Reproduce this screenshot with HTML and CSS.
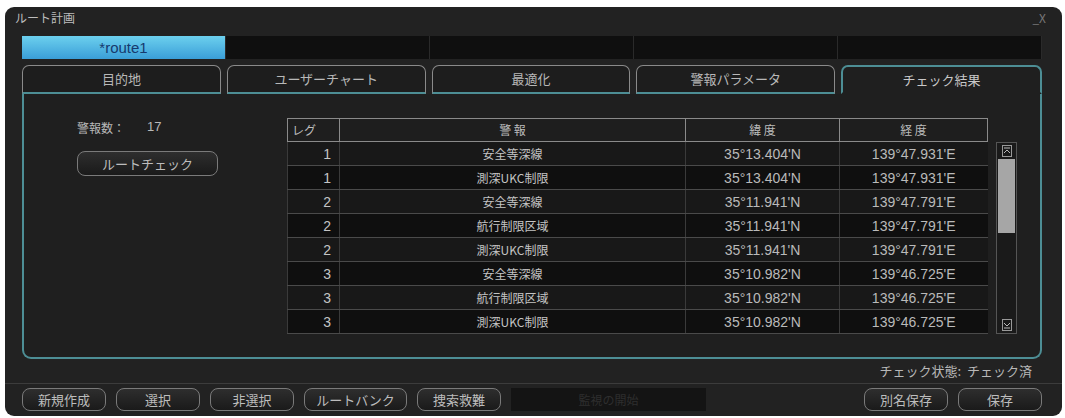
FILE: index.html
```html
<!DOCTYPE html>
<html lang="ja">

<head>
    <meta charset="UTF-8">
    <title>ルート計画</title>
    <link rel="stylesheet" href="styles.css">
</head>

<body>
    <div class="window">
        <div class="titlebar">
            <span>ルート計画</span>
            <span class="winctl">_X</span>
        </div>
        <div class="routes">
            <div class="route active">*route1</div>
            <div class="route"></div>
            <div class="route"></div>
            <div class="route"></div>
            <div class="route"></div>
        </div>
        <div class="tabs">
            <div class="tab">目的地</div>
            <div class="tab">ユーザーチャート</div>
            <div class="tab">最適化</div>
            <div class="tab">警報パラメータ</div>
            <div class="tab active">チェック結果</div>
        </div>
        <div class="panel">
            <div class="side">
                <div class="count"><span>警報数：</span><span>17</span></div>
                <button class="btn check">ルートチェック</button>
            </div>
            <div class="tablewrap">
                <table class="alarms">
                    <thead>
                        <tr><th class="leg">レグ</th><th>警 報</th><th>緯 度</th><th>経 度</th></tr>
                    </thead>
                    <tbody>
                        <tr><td class="leg">1</td><td>安全等深線</td><td>35°13.404'N</td><td>139°47.931'E</td></tr>
                        <tr><td class="leg">1</td><td>測深UKC制限</td><td>35°13.404'N</td><td>139°47.931'E</td></tr>
                        <tr><td class="leg">2</td><td>安全等深線</td><td>35°11.941'N</td><td>139°47.791'E</td></tr>
                        <tr><td class="leg">2</td><td>航行制限区域</td><td>35°11.941'N</td><td>139°47.791'E</td></tr>
                        <tr><td class="leg">2</td><td>測深UKC制限</td><td>35°11.941'N</td><td>139°47.791'E</td></tr>
                        <tr><td class="leg">3</td><td>安全等深線</td><td>35°10.982'N</td><td>139°46.725'E</td></tr>
                        <tr><td class="leg">3</td><td>航行制限区域</td><td>35°10.982'N</td><td>139°46.725'E</td></tr>
                        <tr><td class="leg">3</td><td>測深UKC制限</td><td>35°10.982'N</td><td>139°46.725'E</td></tr>
                    </tbody>
                </table>
                <div class="scrollbar">
                    <div class="arrow">
                        <svg width="12" height="14" viewBox="0 0 12 14"><rect x="1.5" y="1.5" width="9" height="11" stroke="#999" fill="none"/><path d="M3 4h6M3 9l3-3 3 3" stroke="#bbb" fill="none"/></svg>
                    </div>
                    <div class="thumb"></div>
                    <div class="track"></div>
                    <div class="arrow">
                        <svg width="12" height="14" viewBox="0 0 12 14"><rect x="1.5" y="1.5" width="9" height="11" stroke="#999" fill="none"/><path d="M3 10h6M3 5l3 3 3-3" stroke="#bbb" fill="none"/></svg>
                    </div>
                </div>
            </div>
        </div>
        <div class="status">チェック状態:&nbsp;&nbsp;チェック済</div>
        <div class="footer">
            <button class="btn">新規作成</button>
            <button class="btn">選択</button>
            <button class="btn">非選択</button>
            <button class="btn">ルートバンク</button>
            <button class="btn">捜索救難</button>
            <div class="disabled">監視の開始</div>
            <div class="spacer"></div>
            <button class="btn">別名保存</button>
            <button class="btn">保存</button>
        </div>
    </div>
</body>

</html>
```

FILE: styles.css
```css
body {
    margin: 0;
    background: #fff;
    font-family: "Noto Sans CJK JP", "Noto Sans", sans-serif;
    font-size: 12px;
    color: #c4c4c4;
}

.window {
    margin: 7px 3px 0 5px;
    height: 409px;
    box-sizing: border-box;
    border-radius: 9px;
    background: #222222;
    padding: 0 20px 0 17px;
    display: flex;
    flex-direction: column;
}

.titlebar {
    height: 29px;
    display: flex;
    justify-content: space-between;
    align-items: flex-start;
    padding-top: 2px;
    box-sizing: border-box;
    margin-left: -7px;
    margin-right: -4px;
    color: #bdbdbd;
    font-size: 12px;
}

.winctl {
    color: #777;
    font-size: 12px;
}

/* route selector */
.routes {
    height: 23px;
    display: flex;
    background: #0f0f0f;
}

.route {
    flex: 1;
    border-right: 1px solid #2a2a2a;
}

.route.active {
    flex: 0 0 203px;
    background: linear-gradient(#6cd0ee, #3a9ed8);
    color: #163a6e;
    font-family: "Liberation Sans", sans-serif;
    font-size: 15px;
    text-align: center;
    line-height: 23px;
}

/* tabs */
.tabs {
    margin-top: 6px;
    display: flex;
    gap: 6px;
}

.tab {
    flex: 1;
    height: 26px;
    line-height: 26px;
    text-align: center;
    border: 1px solid #8a8a8a;
    border-bottom: 2px solid #4d8e95;
    border-radius: 7px 7px 0 0;
    background: #1d1d1d;
    color: #b8b8b8;
    font-size: 13px;
}

.tab.active {
    border: 2px solid #4d8e95;
    border-bottom: 2px solid transparent;
    height: 25px;
    background: #1f1f1f;
    color: #c8c8c8;
}

.panel {
    height: 263px;
    border: 2px solid #4d8e95;
    border-top: none;
    border-radius: 0 0 9px 9px;
    background: #1f1f1f;
    display: flex;
    align-items: flex-start;
}

.side {
    width: 210px;
    padding: 25px 0 0 53px;
}

.count {
    display: flex;
    gap: 22px;
    color: #b8b8b8;
}

.count span:last-child {
    font-family: "Liberation Sans", sans-serif;
    font-size: 13px;
}

.btn {
    height: 23px;
    padding: 0;
    border: 1px solid #7a7a7a;
    border-radius: 8px;
    background: linear-gradient(#2e2e2e, #1a1a1a);
    color: #bdbdbd;
    font-family: "Noto Sans CJK JP", sans-serif;
    font-size: 13px;
}

.check {
    margin-top: 15px;
    width: 141px;
    height: 25px;
}

/* alarm table */
.tablewrap {
    display: flex;
    align-items: flex-start;
    gap: 8px;
    padding-top: 24px;
}

.alarms {
    width: 701px;
    border-collapse: collapse;
    font-size: 12px;
}

.alarms th {
    height: 22px;
    padding: 0;
    line-height: 20px;
    border: 1px solid #8a8a8a;
    background: #1e1e1e;
    color: #bcbcbc;
    font-weight: normal;
}

.alarms th.leg {
    text-align: left;
    padding-left: 4px;
}

.alarms tbody tr {
    height: 24px;
}

.alarms td {
    padding: 0;
    line-height: 20px;
    border-top: 1px solid #4a4a4a;
    border-bottom: 1px solid #4a4a4a;
    border-left: 1px solid #3a3a3a;
    text-align: center;
    color: #c4c4c4;
}

.alarms tbody tr:nth-child(odd) {
    background: #181818;
}

.alarms tbody tr:nth-child(even) {
    background: #0f0f0f;
}

.alarms td:nth-child(3),
.alarms td:nth-child(4) {
    font-family: "Liberation Sans", sans-serif;
    font-size: 14px;
    color: #bababa;
}

.alarms .leg {
    width: 52px;
    box-sizing: border-box;
}

td.leg {
    text-align: right;
    padding-right: 8px;
    font-family: "Liberation Sans", sans-serif;
    font-size: 14px;
}

.alarms th:nth-child(2) {
    width: 345px;
}

.alarms th:nth-child(3) {
    width: 153px;
}

.scrollbar {
    margin-top: 24px;
    width: 19px;
    height: 190px;
    border: 1px solid #555;
    background: #1a1a1a;
    display: flex;
    flex-direction: column;
}

.arrow {
    height: 16px;
    display: flex;
    align-items: center;
    justify-content: center;
}

.thumb {
    height: 74px;
    margin: 0 1px;
    background: #a6a6a6;
}

.track {
    flex: 1;
}

.status {
    height: 24px;
    line-height: 24px;
    text-align: right;
    color: #b8b8b8;
    font-size: 13px;
    border-bottom: 1px solid #3c3c3c;
    margin: 0 -20px 0 -17px;
    padding-right: 30px;
}

.footer {
    display: flex;
    gap: 10px;
    padding-top: 4px;
}

.footer .btn {
    width: 84px;
}

.footer .btn:nth-child(4) {
    width: 103px;
}

.disabled {
    width: 195px;
    height: 23px;
    background: #141414;
    color: #2e2e2e;
    text-align: center;
    line-height: 23px;
}

.spacer {
    flex: 1;
}
```
